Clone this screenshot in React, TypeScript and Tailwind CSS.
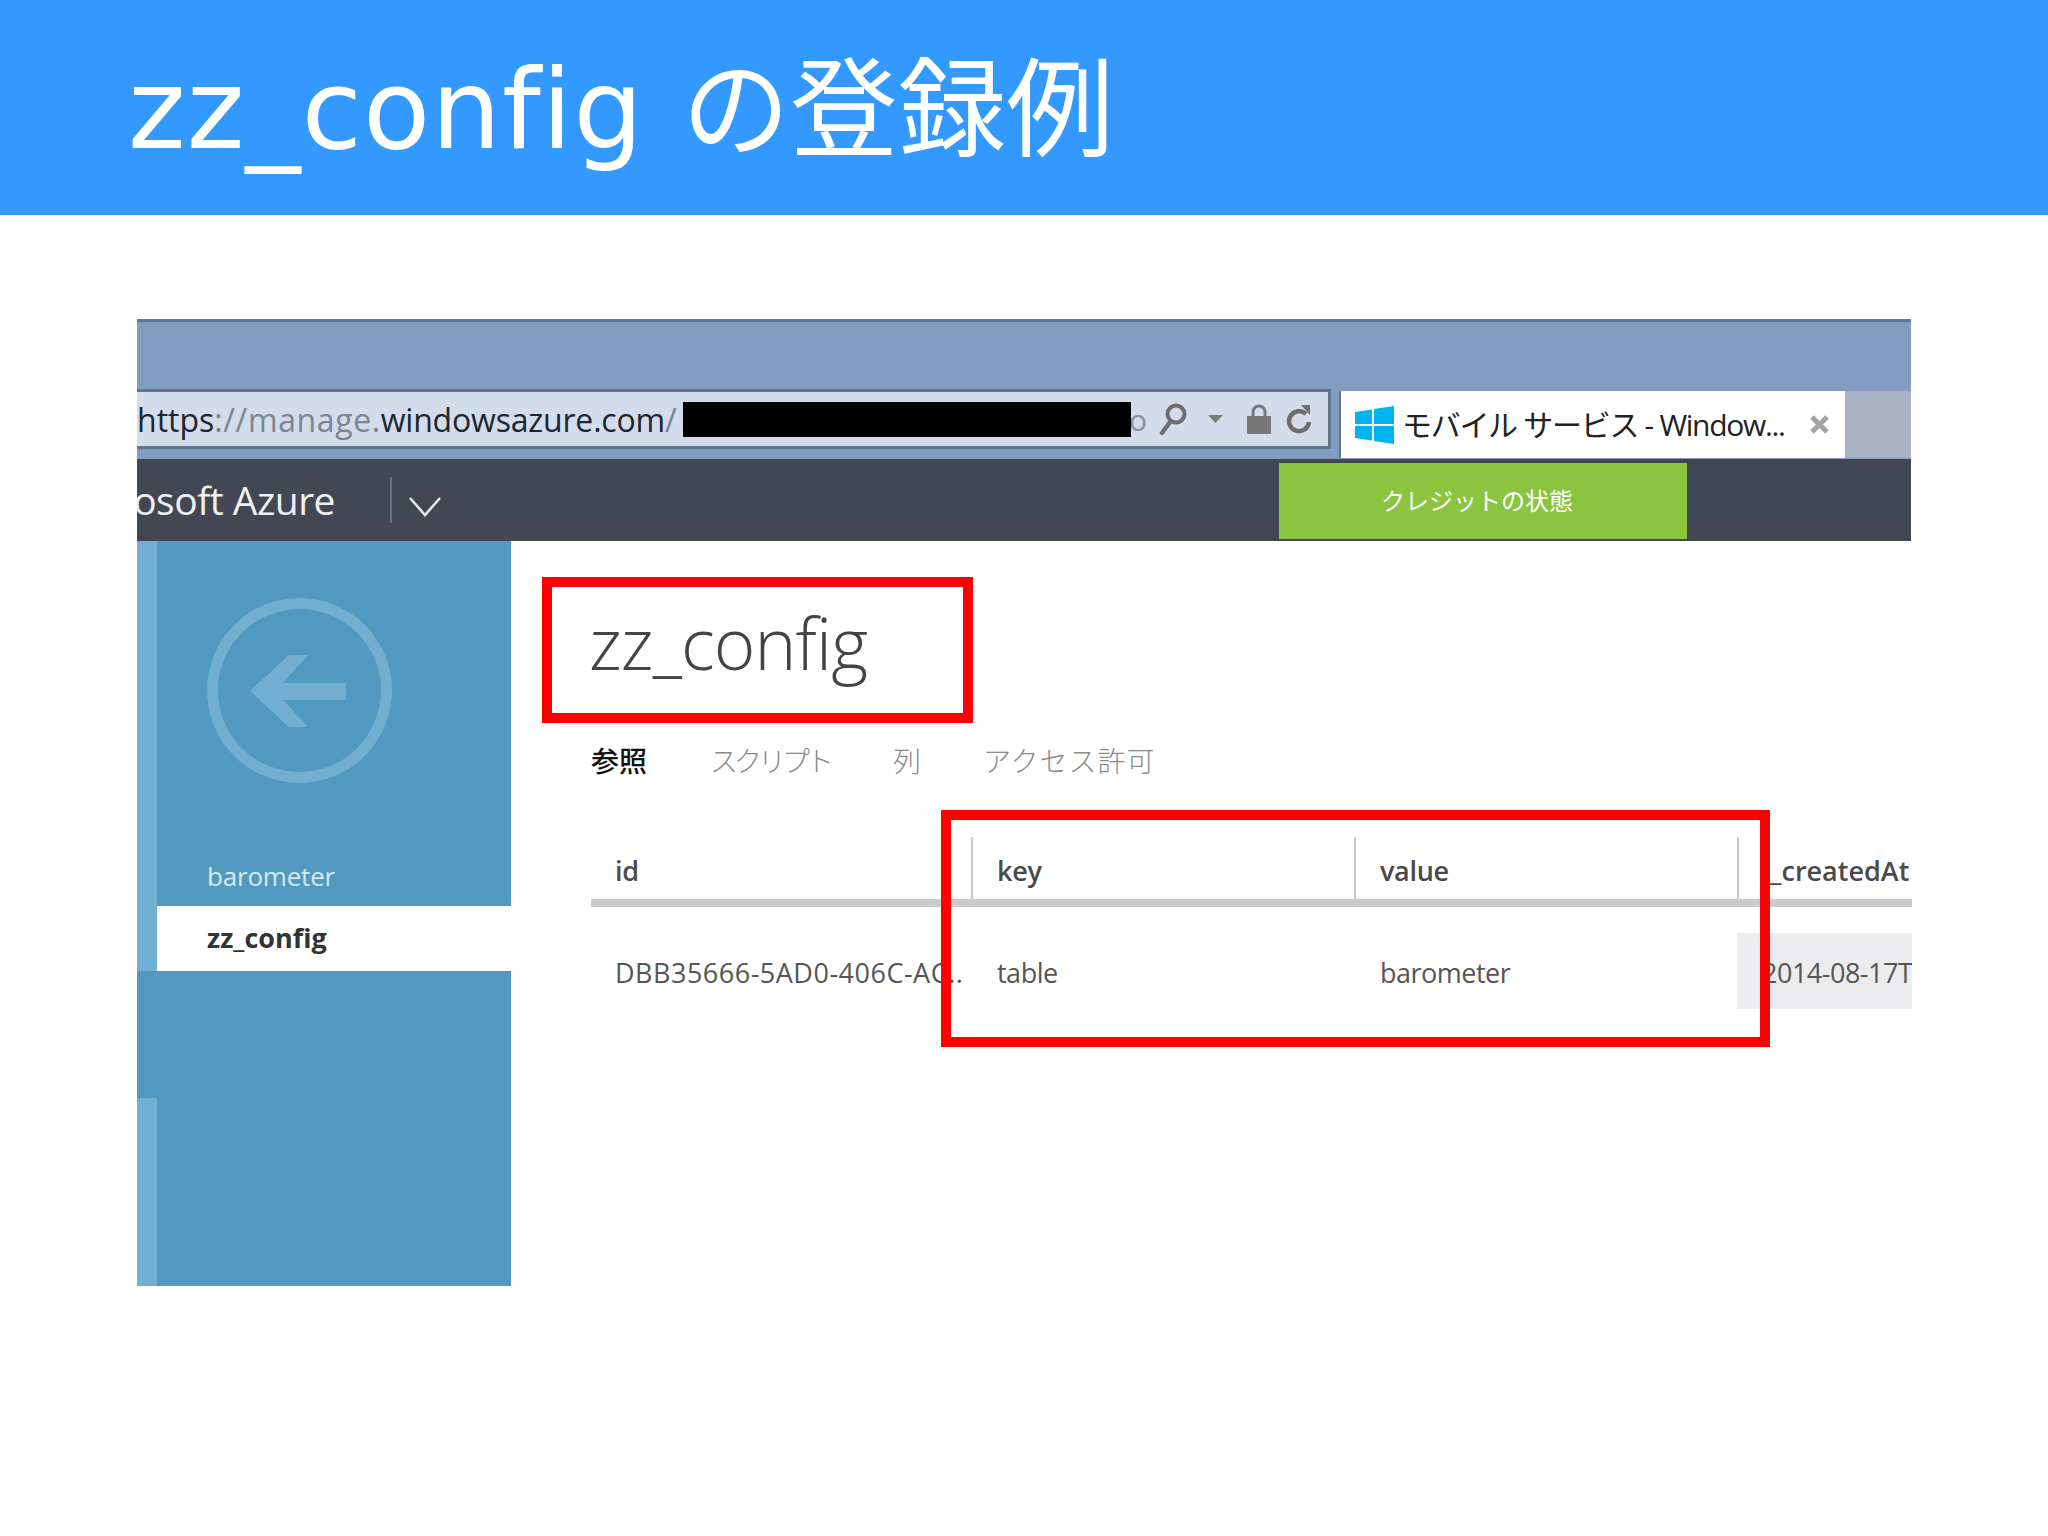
const latin = "font-['Open_Sans','Noto_Sans_CJK_JP',sans-serif]";

function RedBox({ className }: { className: string }) {
  return <div className={`absolute border-[10px] border-[#ff0000] ${className}`} />;
}

function BackIcon() {
  return (
    <svg width="185" height="185" viewBox="0 0 185 185" className="ml-[50px] mt-[57px] block">
      <circle cx="92.5" cy="92.5" r="87" fill="none" stroke="#72aecf" strokeWidth="11" />
      <polygon
        points="43,93 82,57 101,57 76,85 139,85 139,102 76,102 101,129 82,129"
        fill="#72aecf"
      />
    </svg>
  );
}

function AddressIcons() {
  return (
    <>
      <svg width="28" height="32" viewBox="0 0 28 32" className="ml-[12px] shrink-0">
        <circle cx="17" cy="11" r="8.5" fill="none" stroke="#6e6e6e" strokeWidth="4" />
        <path d="M11 19 L3 30" stroke="#6e6e6e" strokeWidth="4.5" strokeLinecap="round" />
      </svg>
      <svg width="15" height="8" viewBox="0 0 15 8" className="ml-[21px] shrink-0">
        <polygon points="0,0 15,0 7.5,8" fill="#7b7b7b" />
      </svg>
      <svg width="24" height="30" viewBox="0 0 24 30" className="ml-[24px] shrink-0">
        <path d="M6 13 V8 a6 6 0 0 1 12 0 V13" fill="none" stroke="#787878" strokeWidth="3" />
        <rect x="0" y="12" width="24" height="18" fill="#787878" />
      </svg>
      <svg width="27" height="29" viewBox="0 0 27 29" className="ml-[15px] shrink-0">
        <path d="M20 9 A10 10 0 1 0 23 17" fill="none" stroke="#6e6e6e" strokeWidth="4.5" />
        <polygon points="15,0 24,0 24,10 " fill="#6e6e6e" />
      </svg>
    </>
  );
}

function WindowsLogo() {
  return (
    <svg width="39" height="38" viewBox="0 0 39 38" className="ml-[14px] shrink-0">
      <polygon points="0,6 17,3.5 17,18 0,18" fill="#00b4f1" />
      <polygon points="19,3 39,0 39,18 19,18" fill="#00b4f1" />
      <polygon points="0,20 17,20 17,34.5 0,32" fill="#00b4f1" />
      <polygon points="19,20 39,20 39,38 19,35" fill="#00b4f1" />
    </svg>
  );
}

function BrowserBar() {
  return (
    <>
      <div className="h-[70px] bg-[#829cbf] border-t-[3px] border-[#5f7590]" />
      <div className="flex h-[70px] items-start bg-[#829cbf]">
        <div className="flex h-[60px] w-[1194px] shrink-0 items-center overflow-hidden border-y-[3px] border-r-[3px] border-[#5f7590] bg-[#d3dcea]">
          <div className={`w-[546px] shrink-0 overflow-hidden whitespace-nowrap pt-[2px] text-[32px] ${latin}`}>
            <span className="text-[#1d2530]">https</span>
            <span className="tracking-[0.6px] text-[#7d8590]">://manage.</span>
            <span className="tracking-[-0.2px] text-[#1d2530]">windowsazure.com</span>
            <span className="text-[#7d8590]">/</span>
          </div>
          <div className="h-[35px] w-[448px] shrink-0 bg-black" />
          <div className={`flex w-[16px] shrink-0 justify-end overflow-hidden text-[30px] text-[#8a8f98] ${latin}`}>o</div>
          <AddressIcons />
        </div>
        <div className="ml-[8px] mt-[2px] flex h-[67px] w-[506px] shrink-0 items-center border-l-2 border-[#5f7590] bg-white">
          <WindowsLogo />
          <span className={`ml-[8px] whitespace-nowrap text-[30px] tracking-[-1.3px] text-[#222] ${latin}`}>
            モバイル サービス - Window...
          </span>
          <svg width="21" height="21" viewBox="0 0 21 21" className="ml-auto mr-[15px] shrink-0">
            <path d="M3 3 L18 18 M18 3 L3 18" stroke="#a3a3a3" strokeWidth="5" />
          </svg>
        </div>
        <div className="mt-[2px] h-[67px] flex-1 bg-[#a9b2c2]" />
      </div>
    </>
  );
}

function AzureBar() {
  return (
    <div className="flex h-[82px] items-center bg-[#434753]">
      <div className={`flex w-[198px] shrink-0 justify-end overflow-hidden whitespace-nowrap text-[39px] tracking-[-0.5px] text-[#eef0f2] ${latin}`}>
        Microsoft Azure
      </div>
      <div className="ml-[55px] h-[46px] w-[2px] bg-[#6b6f7a]" />
      <svg width="32" height="20" viewBox="0 0 32 20" className="ml-[17px] mt-[14px] shrink-0">
        <path d="M1 1 L16 18 L31 1" fill="none" stroke="#e8eaec" strokeWidth="2.5" />
      </svg>
      <div className="ml-[838px] mt-[2px] flex h-[76px] w-[408px] items-center justify-center bg-[#8bc43f] pb-[3px] pr-[12px] font-['Noto_Sans_CJK_JP',sans-serif] text-[24px] text-white">
        クレジットの状態
      </div>
    </div>
  );
}

function Sidebar() {
  return (
    <div className={`flex h-[745px] w-[374px] shrink-0 flex-col bg-[#5199c1] ${latin}`}>
      <div className="flex h-[365px]">
        <div className="w-[20px] bg-[#72b0d3]" />
        <div className="flex-1">
          <BackIcon />
          <div className="ml-[50px] mt-[75px] text-[26px] leading-[36px] tracking-[-0.2px] text-[#d8e9f3]">barometer</div>
        </div>
      </div>
      <div className="flex h-[65px]">
        <div className="w-[20px] bg-[#72b0d3]" />
        <div className="flex flex-1 items-center bg-white pl-[50px] text-[27px] font-bold text-[#333]">zz_config</div>
      </div>
      <div className="h-[127px]" />
      <div className="flex-1">
        <div className="h-full w-[20px] bg-[#72b0d3]" />
      </div>
    </div>
  );
}

const tabs = [
  { label: '参照', className: 'text-[#111] font-medium w-[119px]' },
  { label: 'スクリプト', className: 'text-[#8a8a8a] w-[183px] tracking-[-4px]' },
  { label: '列', className: 'text-[#8a8a8a] w-[90px]' },
  { label: 'アクセス許可', className: 'text-[#8a8a8a] tracking-[1px]' },
];

function Content() {
  return (
    <div className={`flex-1 pl-[80px] ${latin}`}>
      <div className="-ml-[2px] mt-[47px] h-[110px] text-[71px] font-light leading-[110px] tracking-[-0.9px] text-[#444]">zz_config</div>
      <div className="mt-[42px] flex h-[40px] items-center font-['Noto_Sans_CJK_JP',sans-serif] text-[28px] font-light">
        {tabs.map((t) => (
          <div key={t.label} className={t.className}>{t.label}</div>
        ))}
      </div>
      <div className="mt-[57px] flex h-[62px] items-center text-[27px] font-semibold tracking-[-0.3px] text-[#4a4a4a]">
        <div className="w-[380px] pl-[24px] pt-[6px]">id</div>
        <div className="flex h-full w-[383px] items-center border-l-2 border-[#c8c8c8] pl-[24px] pt-[6px]">key</div>
        <div className="flex h-full w-[383px] items-center border-l-2 border-[#c8c8c8] pl-[24px] pt-[6px]">value</div>
        <div className="flex h-full flex-1 items-center overflow-hidden whitespace-nowrap border-l-2 border-[#c8c8c8] pl-[31px] pt-[6px] tracking-[0px]">_createdAt</div>
      </div>
      <div className="h-[8px] bg-[#cccccc]" />
      <div className="mt-[26px] flex h-[76px] items-center text-[27px] tracking-[-0.5px] text-[#555]">
        <div className="w-[380px] whitespace-nowrap pl-[24px] pt-[4px] tracking-[0.5px]">DBB35666-5AD0-406C-AC..</div>
        <div className="w-[383px] pl-[26px] pt-[4px]">table</div>
        <div className="w-[383px] pl-[26px] pt-[4px]">barometer</div>
        <div className="flex h-full flex-1 items-center overflow-hidden whitespace-nowrap bg-[#ececef] pl-[25px] pt-[4px]">2014-08-17T</div>
      </div>
    </div>
  );
}

export default function App() {
  return (
    <div className="h-[1536px] w-[2048px] overflow-hidden bg-white [font-variant-ligatures:none]">
      <div className="flex h-[215px] items-baseline whitespace-nowrap bg-[#3399ff] pl-[128px] pt-[35px] font-['DejaVu_Sans','Noto_Sans_CJK_JP',sans-serif] text-[110px] leading-[150px] text-white">
        <span className="tracking-[1px]">zz_config</span>
        <span className="ml-[38px] text-[108px]">の登録例</span>
      </div>
      <div className="relative ml-[137px] mt-[104px] w-[1774px]">
        <BrowserBar />
        <AzureBar />
        <div className="flex">
          <Sidebar />
          <Content />
        </div>
        <RedBox className="left-[405px] top-[258px] h-[146px] w-[431px]" />
        <RedBox className="left-[804px] top-[491px] h-[237px] w-[829px]" />
      </div>
    </div>
  );
}
